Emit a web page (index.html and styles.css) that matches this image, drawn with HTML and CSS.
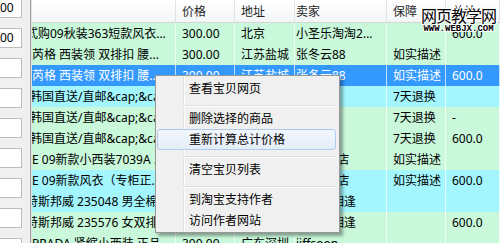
FILE: index.html
```html
<!DOCTYPE html>
<html lang="zh-CN">
<head>
<meta charset="UTF-8" />
<title>宝贝列表</title>
<link rel="stylesheet" href="styles.css">
</head>
<body>
  <div class="app">
    <aside class="side">
      <div class="field">00</div>
      <div class="field">00</div>
      <div class="field"></div>
      <div class="field"></div>
      <div class="field"></div>
      <div class="field"></div>
      <div class="field"></div>
      <div class="field"></div>
      <div class="field"></div>
    </aside>

    <div class="grid">
      <div class="row head">
        <div class="cell"></div>
        <div class="cell">价格</div>
        <div class="cell">地址</div>
        <div class="cell seller">卖家</div>
        <div class="cell">保障</div>
        <div class="cell">总计</div>
      </div>
      <div class="row green">
        <div class="cell name cut-m">式购09秋装363短款风衣修身外套</div>
        <div class="cell">300.00</div>
        <div class="cell">北京</div>
        <div class="cell seller">小圣乐淘淘2号旗舰</div>
        <div class="cell"></div>
        <div class="cell">600.0</div>
      </div>
      <div class="row green">
        <div class="cell name">芮格 西装领 双排扣 腰...</div>
        <div class="cell">300.00</div>
        <div class="cell">江苏盐城</div>
        <div class="cell seller">张冬云88</div>
        <div class="cell">如实描述</div>
        <div class="cell"></div>
      </div>
      <div class="row picked">
        <div class="cell name">芮格 西装领 双排扣 腰...</div>
        <div class="cell">300.00</div>
        <div class="cell">江苏盐城</div>
        <div class="cell seller">张冬云88</div>
        <div class="cell">如实描述</div>
        <div class="cell">600.0</div>
      </div>
      <div class="row cyan">
        <div class="cell name cut-s">韩国直送/直邮&amp;cap;&amp;cap;正品</div>
        <div class="cell">300.00</div>
        <div class="cell">上海</div>
        <div class="cell seller">hanguo</div>
        <div class="cell">7天退换</div>
        <div class="cell"></div>
      </div>
      <div class="row green">
        <div class="cell name cut-s">韩国直送/直邮&amp;cap;&amp;cap;正品</div>
        <div class="cell">300.00</div>
        <div class="cell">上海</div>
        <div class="cell seller">hanguo</div>
        <div class="cell">7天退换</div>
        <div class="cell">-</div>
      </div>
      <div class="row green">
        <div class="cell name cut-s">韩国直送/直邮&amp;cap;&amp;cap;正品</div>
        <div class="cell">300.00</div>
        <div class="cell">上海</div>
        <div class="cell seller">hanguo</div>
        <div class="cell">7天退换</div>
        <div class="cell">600.0</div>
      </div>
      <div class="row green">
        <div class="cell name">E 09新款小西装7039A 修身</div>
        <div class="cell">300.00</div>
        <div class="cell">浙江杭州</div>
        <div class="cell seller">LUCY小店</div>
        <div class="cell">如实描述</div>
        <div class="cell"></div>
      </div>
      <div class="row cyan">
        <div class="cell name">E 09新款风衣（专柜正品）</div>
        <div class="cell">300.00</div>
        <div class="cell">浙江杭州</div>
        <div class="cell seller">LUCY小店</div>
        <div class="cell">如实描述</div>
        <div class="cell">600.0</div>
      </div>
      <div class="row cyan">
        <div class="cell name cut-m">特斯邦威 235048 男全棉休闲</div>
        <div class="cell">300.00</div>
        <div class="cell">广东广州</div>
        <div class="cell seller">美丽的相逢</div>
        <div class="cell"></div>
        <div class="cell"></div>
      </div>
      <div class="row green">
        <div class="cell name cut-m">特斯邦威 235576 女双排扣</div>
        <div class="cell">300.00</div>
        <div class="cell">广东广州</div>
        <div class="cell seller">美丽的相逢</div>
        <div class="cell"></div>
        <div class="cell">600.0</div>
      </div>
      <div class="row green">
        <div class="cell name">PRADA 紧缩小西装 正品</div>
        <div class="cell">300.00</div>
        <div class="cell">广东深圳</div>
        <div class="cell seller">jiffsoon</div>
        <div class="cell"></div>
        <div class="cell"></div>
      </div>
    </div>

    <ul class="menu">
      <li class="item">查看宝贝网页</li>
      <li class="sep"></li>
      <li class="item">删除选择的商品</li>
      <li class="item hot">重新计算总计价格</li>
      <li class="sep"></li>
      <li class="item">清空宝贝列表</li>
      <li class="sep"></li>
      <li class="item">到淘宝支持作者</li>
      <li class="item">访问作者网站</li>
    </ul>

    <div class="mark">
      <div class="mark-title">网页教学网</div>
      <div class="mark-url">WWW.WEBJX.COM</div>
    </div>
  </div>
</body>
</html>
```

FILE: styles.css
```css
body {
  margin: 0;
  background: #f0f0f0;
  font-family: "Noto Sans", "Noto Sans CJK SC", sans-serif;
  font-size: 12px;
  color: #000;
}
.app {
  position: relative;
  display: flex;
  width: 500px;
  height: 243px;
  overflow: hidden;
}
.side {
  flex: none;
  width: 30px;
  border-right: 1px solid #a0a0a0;
  display: flex;
  flex-direction: column;
  gap: 10px;
}
.field {
  flex: none;
  box-sizing: border-box;
  width: 22px;
  height: 20px;
  background: #fff;
  border: 1px solid #bcbcbc;
  border-left: 0;
  line-height: 18px;
  overflow: hidden;
  white-space: nowrap;
}
.field:first-child {
  margin-top: -2px;
}
.grid {
  flex: 1;
  min-width: 0;
  border-left: 1px solid #e2e2e2;
  background: #fff;
}
.row {
  display: grid;
  grid-template-columns: 144px 59px 60px 92px 59px 1fr;
  height: 21px;
  line-height: 21px;
}
.cell {
  padding-left: 6px;
  padding-right: 4px;
  white-space: nowrap;
  overflow: hidden;
  text-overflow: ellipsis;
  border-right: 1px solid rgba(255, 255, 255, 0.7);
}
.cell.seller {
  padding-left: 1px;
}
.cell.name {
  padding-left: 0;
  padding-right: 3px;
}
.cut-s {
  text-indent: -2px;
}
.cut-m {
  text-indent: -6px;
}
.head {
  height: 23px;
  line-height: 23px;
  box-sizing: border-box;
  border-bottom: 1px solid #d5d5d5;
  background: linear-gradient(#ffffff, #f4f5f7);
  color: #1e1e1e;
}
.head .cell {
  border-right: 1px solid #e3e3e3;
}
.green {
  background: #c9f8da;
}
.cyan {
  background: #a3f6fd;
}
.picked {
  background: #3399ff;
  color: #fff;
}

/* context menu */
.menu {
  position: absolute;
  left: 155px;
  top: 75px;
  box-sizing: border-box;
  width: 185px;
  height: 158px;
  margin: 0;
  padding: 2px 3px 2px 1px;
  list-style: none;
  border: 1px solid #979797;
  background:
    linear-gradient(to right, transparent 27px, #e2e3e3 27px, #e2e3e3 28px, #fff 28px, #fff 29px, transparent 29px),
    #f0f0f0;
  box-shadow: 3px 3px 3px rgba(0, 0, 0, 0.35);
}
.item {
  box-sizing: border-box;
  height: 21px;
  line-height: 20px;
  padding-left: 31px;
  border: 1px solid transparent;
  border-radius: 3px;
}
.item.hot {
  border-color: #aecbee;
  background: linear-gradient(#f2f6fc, #e4edf8);
}
.sep {
  height: 9px;
  box-sizing: border-box;
  margin-left: 26px;
  padding-top: 6px;
}
.sep::before {
  content: "";
  display: block;
  height: 1px;
  background: #e0e0e0;
  border-bottom: 1px solid #fff;
}

/* watermark over the corner */
.mark {
  position: absolute;
  right: 4px;
  top: 6px;
  text-align: center;
  color: #000;
  text-shadow: 1px 0 #fff, -1px 0 #fff, 0 1px #fff, 0 -1px #fff, 1px 1px #fff, -1px -1px #fff;
}
.mark-title {
  font-family: "Noto Sans CJK SC", sans-serif;
  font-size: 16px;
  line-height: 18px;
  letter-spacing: -1px;
}
.mark-url {
  font-family: "Liberation Mono", monospace;
  font-size: 9px;
  font-weight: bold;
  line-height: 9px;
  margin-top: 1px;
}
```
